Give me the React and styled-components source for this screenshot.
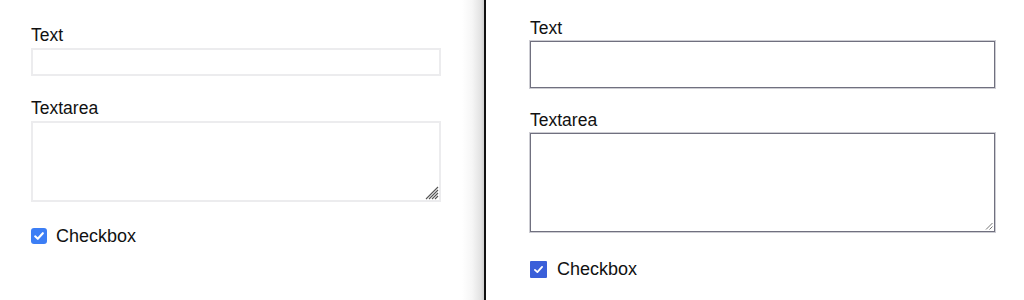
import React from 'react';
import styled, { createGlobalStyle } from 'styled-components';

const GlobalStyle = createGlobalStyle`
  html, body {
    margin: 0;
    padding: 0;
    background: #fff;
  }
  body {
    font-family: "Liberation Sans", Arial, sans-serif;
    color: #111;
  }
`;

const Page = styled.div`
  display: flex;
  width: 1024px;
  height: 300px;
  overflow: hidden;
`;

// left panel: soft look, fades to a shadow before the divider
const Panel = styled.section`
  box-sizing: border-box;
  display: flex;
  flex-direction: column;
  width: ${(p) => p.$width};
  flex: ${(p) => (p.$grow ? '1' : 'none')};
  padding: ${(p) => p.$pad};
  background: ${(p) =>
    p.$shadow
      ? 'linear-gradient(to right, #fff 0, #fff calc(100% - 22px), #f6f6f6 calc(100% - 12px), #e2e2e2 calc(100% - 3px), #cfcfcf 100%)'
      : '#fff'};
`;

const Divider = styled.div`
  width: 2px;
  flex: none;
  background: #111;
`;

const Field = styled.div`
  display: flex;
  flex-direction: column;
  gap: 3px;
  width: ${(p) => p.$width};
  margin-bottom: 22px;
`;

const Label = styled.label`
  font-size: 17.5px;
  line-height: 20px;
  color: #111;
`;

const TextInput = styled.input`
  box-sizing: border-box;
  width: 100%;
  height: ${(p) => p.$height};
  margin: 0;
  padding: 4px 8px;
  font: inherit;
  border: ${(p) => (p.$dark ? '1px solid #70707f' : '2px solid #ececee')};
  box-shadow: ${(p) => (p.$dark ? '0 0 0 1px rgba(112, 112, 130, 0.35)' : 'none')};
  border-radius: 0;
  background: #fff;
  outline: none;
`;

const AreaWrap = styled.div`
  position: relative;
  width: 100%;
  height: ${(p) => p.$height};
`;

const TextArea = styled.textarea`
  box-sizing: border-box;
  display: block;
  width: 100%;
  height: 100%;
  margin: 0;
  padding: 4px 8px;
  font: inherit;
  resize: none;
  border: ${(p) => (p.$dark ? '1px solid #70707f' : '2px solid #ececee')};
  box-shadow: ${(p) => (p.$dark ? '0 0 0 1px rgba(112, 112, 130, 0.35)' : 'none')};
  border-radius: 0;
  background: #fff;
  outline: none;
`;

const Grip = styled.svg`
  position: absolute;
  right: ${(p) => p.$inset};
  bottom: ${(p) => p.$inset};
  pointer-events: none;
`;

const CheckRow = styled.label`
  display: flex;
  align-items: center;
  gap: ${(p) => p.$gap};
  height: 22px;
  margin-top: ${(p) => p.$top};
  font-size: 18px;
  color: #111;
`;

const CheckBox = styled.span`
  display: flex;
  align-items: center;
  justify-content: center;
  width: ${(p) => p.$size};
  height: ${(p) => p.$size};
  border-radius: ${(p) => p.$radius};
  background: ${(p) => p.$color};
`;

const BigGrip = () => (
  <Grip width="15" height="15" viewBox="0 0 15 15" $inset="2px">
    <g stroke="#555" strokeWidth="1.1">
      <line x1="14" y1="2" x2="2" y2="14" />
      <line x1="14" y1="5" x2="5" y2="14" />
      <line x1="14" y1="8" x2="8" y2="14" />
      <line x1="14" y1="11" x2="11" y2="14" />
    </g>
  </Grip>
);

const SmallGrip = () => (
  <Grip width="8" height="8" viewBox="0 0 8 8" $inset="2px">
    <g stroke="#777" strokeWidth="1">
      <line x1="7.5" y1="1" x2="1" y2="7.5" />
      <line x1="7.5" y1="4.5" x2="4.5" y2="7.5" />
    </g>
  </Grip>
);

const Tick = ({ size, stroke }) => (
  <svg width={size} height={size} viewBox="0 0 16 16" fill="none">
    <path d="M3.6 8.4 L6.6 11.2 L12.4 4.8" stroke="#fff" strokeWidth={stroke} strokeLinecap="round" strokeLinejoin="round" />
  </svg>
);

export default function App() {
  return (
    <>
      <GlobalStyle />
      <Page>
        <Panel $width="484px" $pad="25px 0 0 31px" $shadow>
          <Field $width="410px">
            <Label>Text</Label>
            <TextInput type="text" $height="28px" />
          </Field>
          <Field $width="410px">
            <Label>Textarea</Label>
            <AreaWrap $height="81px">
              <TextArea />
              <BigGrip />
            </AreaWrap>
          </Field>
          <CheckRow $top="1px" $gap="9px">
            <CheckBox $size="16px" $radius="3px" $color="#3c7ef5">
              <Tick size={14} stroke={2.4} />
            </CheckBox>
            Checkbox
          </CheckRow>
        </Panel>
        <Divider />
        <Panel $grow $pad="18px 0 0 44px">
          <Field $width="465px">
            <Label>Text</Label>
            <TextInput type="text" $height="47px" $dark />
          </Field>
          <Field $width="465px">
            <Label>Textarea</Label>
            <AreaWrap $height="99px">
              <TextArea $dark />
              <SmallGrip />
            </AreaWrap>
          </Field>
          <CheckRow $top="4px" $gap="10px">
            <CheckBox $size="17px" $radius="1px" $color="#3a5fd9">
              <Tick size={13} stroke={2.2} />
            </CheckBox>
            Checkbox
          </CheckRow>
        </Panel>
      </Page>
    </>
  );
}
